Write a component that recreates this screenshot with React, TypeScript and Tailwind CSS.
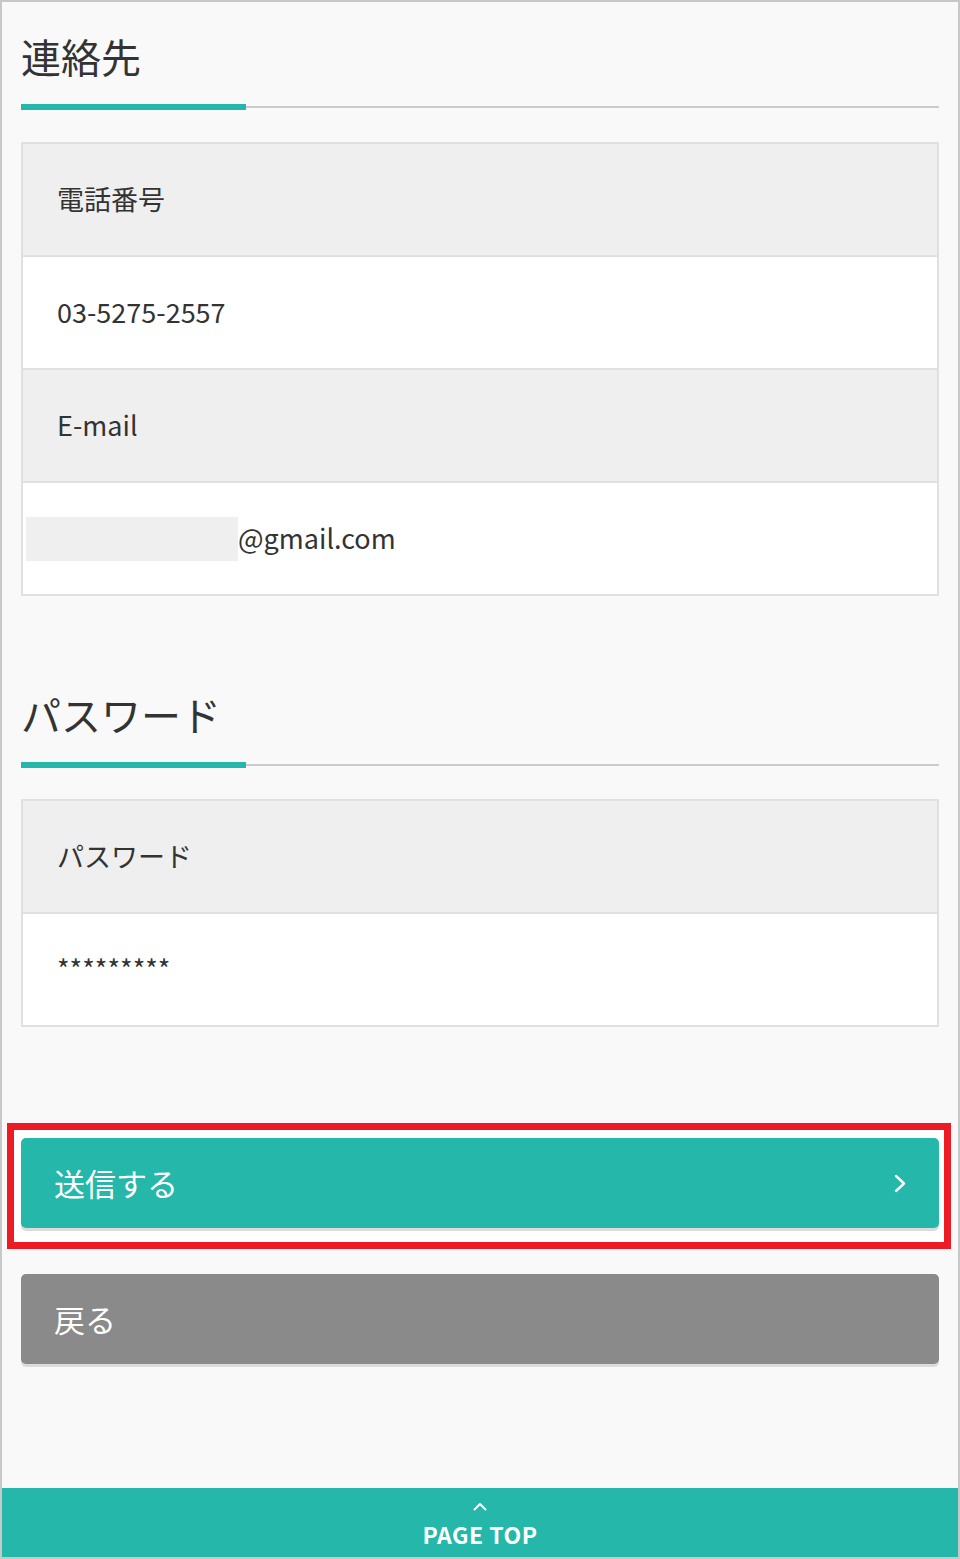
interface Row {
  label: string;
  value: React.ReactNode;
}

function SectionTitle({ title }: { title: string }) {
  return (
    <div>
      <h2 className="text-[40px] leading-[60px] text-[#333333]">{title}</h2>
      <div className="mt-[18px] flex items-center">
        <div className="w-[225px] h-[6px] bg-[#25b7aa]"></div>
        <div className="flex-1 h-[2px] bg-[#cccccc]"></div>
      </div>
    </div>
  );
}

function InfoTable({ rows }: { rows: Row[] }) {
  return (
    <div className="border-2 border-[#e0e0e0]">
      {rows.map((row, i) => (
        <div key={row.label}>
          <div className="h-[113px] bg-[#efefef] border-b-2 border-[#e0e0e0] flex items-center pl-[34px] text-[27px] text-[#333333]">
            {row.label}
          </div>
          <div
            className={`bg-white flex items-center text-[27px] text-[#333333] ${
              i < rows.length - 1 ? 'h-[113px] border-b-2 border-[#e0e0e0]' : 'h-[111px]'
            }`}
          >
            {row.value}
          </div>
        </div>
      ))}
    </div>
  );
}

export default function App() {
  const contactRows: Row[] = [
    { label: '電話番号', value: <span className="pl-[34px]">03-5275-2557</span> },
    {
      label: 'E-mail',
      value: (
        <div className="pl-[3px] flex items-center">
          <div className="w-[212px] h-[44px] bg-[#efefef]"></div>
          <span>@gmail.com</span>
        </div>
      ),
    },
  ];

  const passwordRows: Row[] = [
    { label: 'パスワード', value: <span className="pl-[34px]">*********</span> },
  ];

  return (
    <div
      className="w-[960px] h-[1559px] border-2 border-[#c8c8c8] bg-[#f9f9f9] flex flex-col"
      style={{ fontFamily: '"Noto Sans CJK JP", "Noto Sans", sans-serif' }}
    >
      <main className="flex-1 pl-[19px] pr-[19px] pt-[24px]">
        <SectionTitle title="連絡先" />
        <div className="mt-[32px]">
          <InfoTable rows={contactRows} />
        </div>

        <div className="mt-[88px]">
          <SectionTitle title="パスワード" />
        </div>
        <div className="mt-[31px]">
          <InfoTable rows={passwordRows} />
        </div>

        <div className="mt-[96px] -ml-[14px] -mr-[12px] border-[7px] border-[#ed1c24] bg-white pl-[7px] pr-[5px] pt-[8px] pb-[14px]">
          <button className="w-full h-[90px] rounded-[5px] bg-[#25b7aa] shadow-[0_3px_0_#dcdcdc] flex items-center justify-between pl-[33px] pr-[33px] text-white text-[31px]">
            <span>送信する</span>
            <svg width="12" height="19" viewBox="0 0 12 19" fill="none" stroke="currentColor" strokeWidth="2.4" strokeLinecap="round" strokeLinejoin="round">
              <polyline points="2,2 10,9.5 2,17" />
            </svg>
          </button>
        </div>

        <button className="mt-[25px] w-full h-[90px] rounded-[5px] bg-[#8a8a8a] shadow-[0_3px_0_#dcdcdc] flex items-center pl-[33px] text-white text-[31px]">
          戻る
        </button>
      </main>

      <footer className="h-[69px] bg-[#25b7aa] flex flex-col items-center pt-[14px] text-white">
        <svg width="14" height="9" viewBox="0 0 14 9" fill="none" stroke="currentColor" strokeWidth="2" strokeLinecap="round" strokeLinejoin="round">
          <polyline points="1.5,7.5 7,2 12.5,7.5" />
        </svg>
        <span className="mt-[8px] text-[23px] font-bold leading-[30px] tracking-[0.5px]">PAGE TOP</span>
      </footer>
    </div>
  );
}
